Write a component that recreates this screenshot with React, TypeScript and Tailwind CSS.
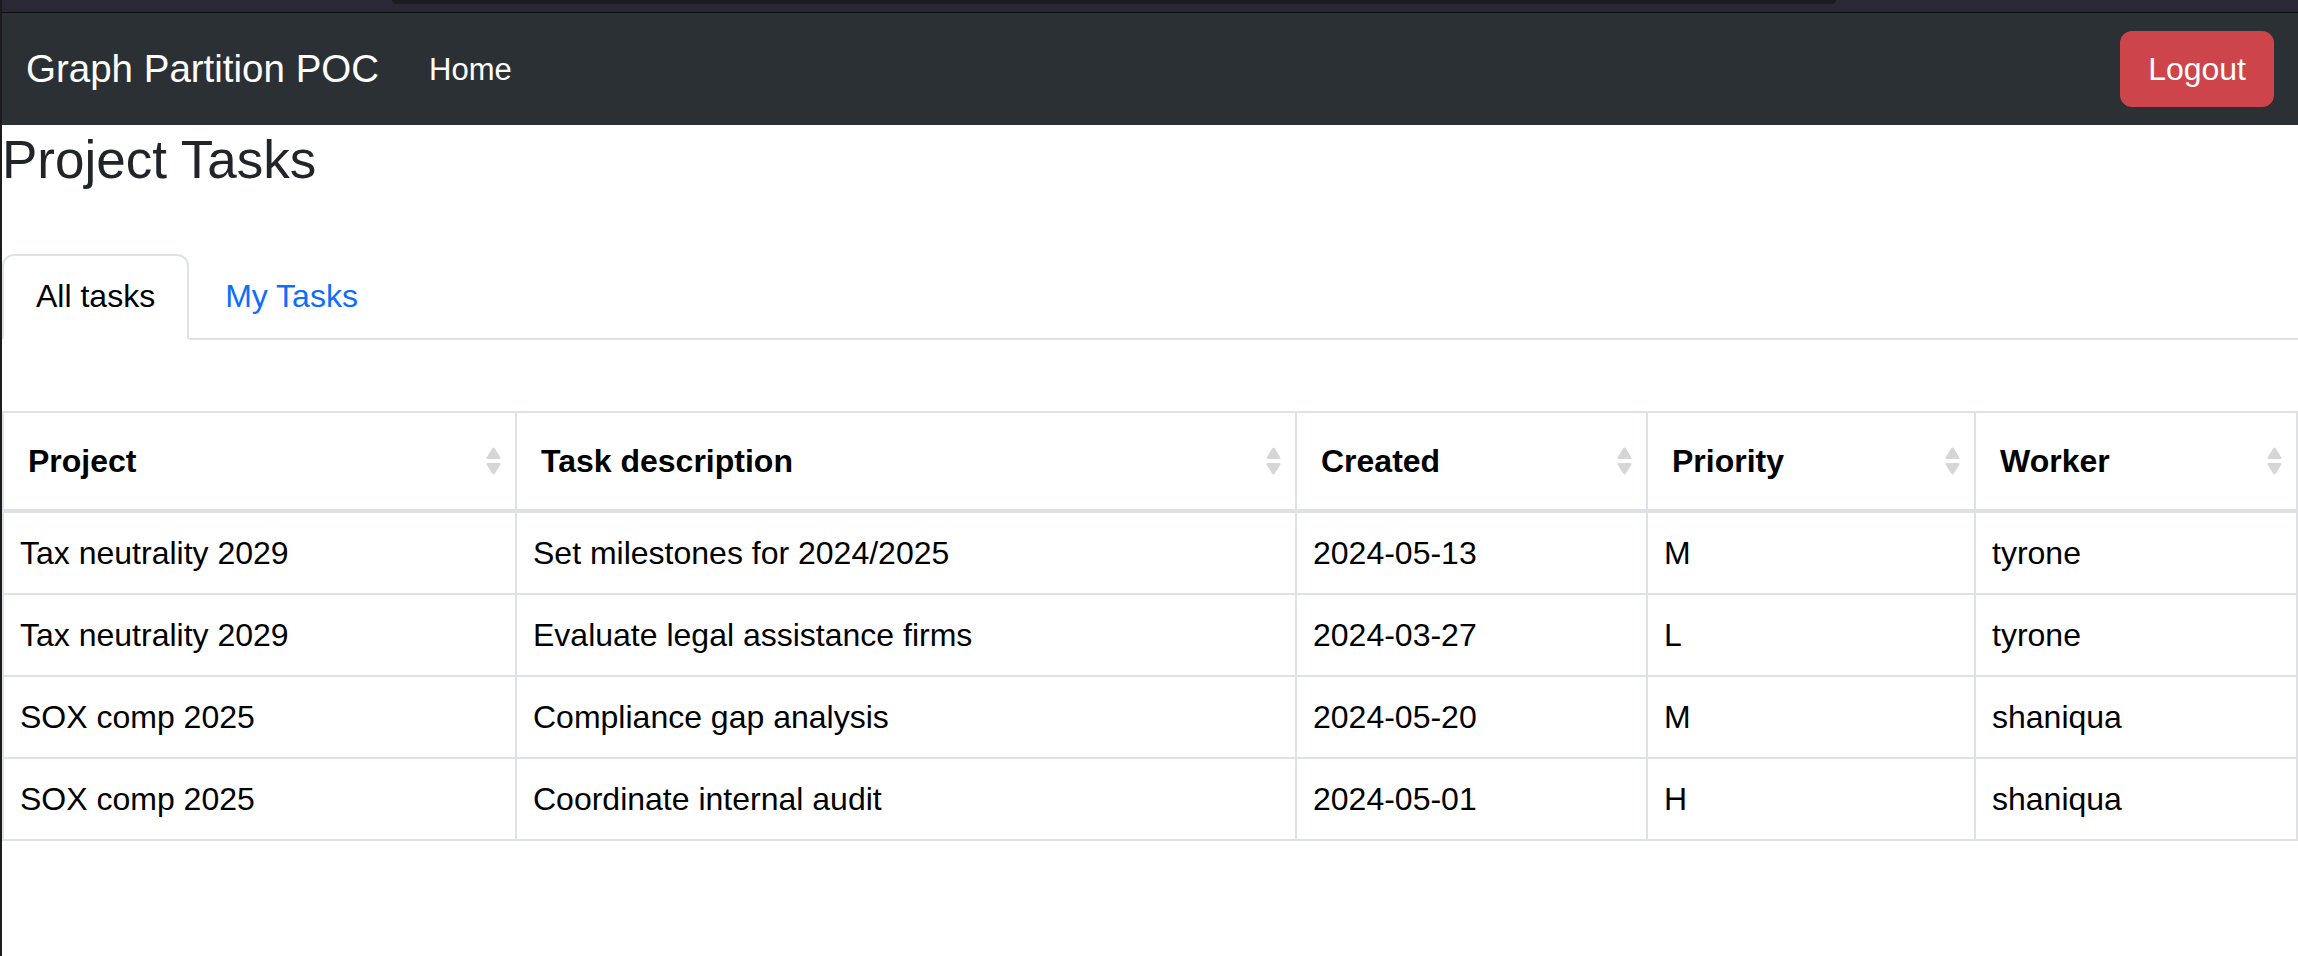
import React from "react";

type Task = {
  project: string;
  description: string;
  created: string;
  priority: string;
  worker: string;
};

const tasks: Task[] = [
  {
    project: "Tax neutrality 2029",
    description: "Set milestones for 2024/2025",
    created: "2024-05-13",
    priority: "M",
    worker: "tyrone",
  },
  {
    project: "Tax neutrality 2029",
    description: "Evaluate legal assistance firms",
    created: "2024-03-27",
    priority: "L",
    worker: "tyrone",
  },
  {
    project: "SOX comp 2025",
    description: "Compliance gap analysis",
    created: "2024-05-20",
    priority: "M",
    worker: "shaniqua",
  },
  {
    project: "SOX comp 2025",
    description: "Coordinate internal audit",
    created: "2024-05-01",
    priority: "H",
    worker: "shaniqua",
  },
];

const columns = ["Project", "Task description", "Created", "Priority", "Worker"];

const SortIcon = () => {
  return (
    <svg width="15" height="28" viewBox="0 0 15 28" className="shrink-0">
      <path d="M6.3 1.2 Q7.5 -0.4 8.7 1.2 L14.4 10.6 Q15 12 13.4 12 L1.6 12 Q0 12 0.6 10.6 Z" fill="#d6d6d6" />
      <path d="M6.3 26.8 Q7.5 28.4 8.7 26.8 L14.4 17.4 Q15 16 13.4 16 L1.6 16 Q0 16 0.6 17.4 Z" fill="#d6d6d6" />
    </svg>
  );
};

const NavBar = () => {
  return (
    <>
      <div className="h-[12px] bg-[#2a2834] pl-[390px] pr-[462px]">
        <div className="h-[4px] bg-[#1c1b21] rounded-b-md" />
      </div>
      <div className="h-px bg-[#0e0e10]" />
      <nav className="h-[112px] bg-[#2b3035] flex items-center justify-between pl-[24px] pr-[24px]">
        <div className="flex items-center">
          <span className="text-white text-[38.5px] leading-[56px]">Graph Partition POC</span>
          <span className="text-white text-[31px] leading-[48px] ml-[50px] mt-[2px]">Home</span>
        </div>
        <button className="bg-[#cd454b] text-white text-[32px] leading-[48px] px-[26px] py-[12px] border-2 border-[#cd454b] rounded-[12px]">
          Logout
        </button>
      </nav>
    </>
  );
};

const Tabs = () => {
  return (
    <div className="mt-[62px] flex border-b-2 border-[#dee2e6]">
      <div className="-mb-[2px] bg-white border-2 border-[#dee2e6] border-b-white rounded-t-[12px] px-[32px] py-[16px] text-[32px] leading-[48px] text-black">
        All tasks
      </div>
      <div className="ml-[2px] border-2 border-transparent px-[32px] py-[16px] text-[32px] leading-[48px] text-[#0d6efd]">
        My Tasks
      </div>
    </div>
  );
};

const TaskTable = () => {
  return (
    <table className="mt-[71px] w-full table-fixed border-collapse border-2 border-[#dee2e6] text-[32px] text-black">
      <colgroup>
        <col className="w-[513px]" />
        <col className="w-[780px]" />
        <col className="w-[351px]" />
        <col className="w-[328px]" />
        <col />
      </colgroup>
      <thead>
        <tr>
          {columns.map((c) => (
            <th
              key={c}
              className="border-2 border-b-4 border-[#dee2e6] pl-[24px] pr-[14px] py-[24px] leading-[48px] font-bold text-left"
            >
              <div className="flex items-center justify-between">
                <span>{c}</span>
                <SortIcon />
              </div>
            </th>
          ))}
        </tr>
      </thead>
      <tbody>
        {tasks.map((t, i) => (
          <tr key={i}>
            <td className="border-2 border-[#dee2e6] px-[16px] py-[16px] leading-[48px]">{t.project}</td>
            <td className="border-2 border-[#dee2e6] px-[16px] py-[16px] leading-[48px]">{t.description}</td>
            <td className="border-2 border-[#dee2e6] px-[16px] py-[16px] leading-[48px]">{t.created}</td>
            <td className="border-2 border-[#dee2e6] px-[16px] py-[16px] leading-[48px]">{t.priority}</td>
            <td className="border-2 border-[#dee2e6] px-[16px] py-[16px] leading-[48px]">{t.worker}</td>
          </tr>
        ))}
      </tbody>
    </table>
  );
};

export default function App() {
  return (
    <div className="min-h-screen w-full bg-white border-l-2 border-[#1b1b1d] font-['Liberation_Sans',Arial,sans-serif]">
      <NavBar />
      <h3 className="mt-[3px] text-[53px] leading-[64px] text-[#212529]">Project Tasks</h3>
      <Tabs />
      <TaskTable />
    </div>
  );
}
